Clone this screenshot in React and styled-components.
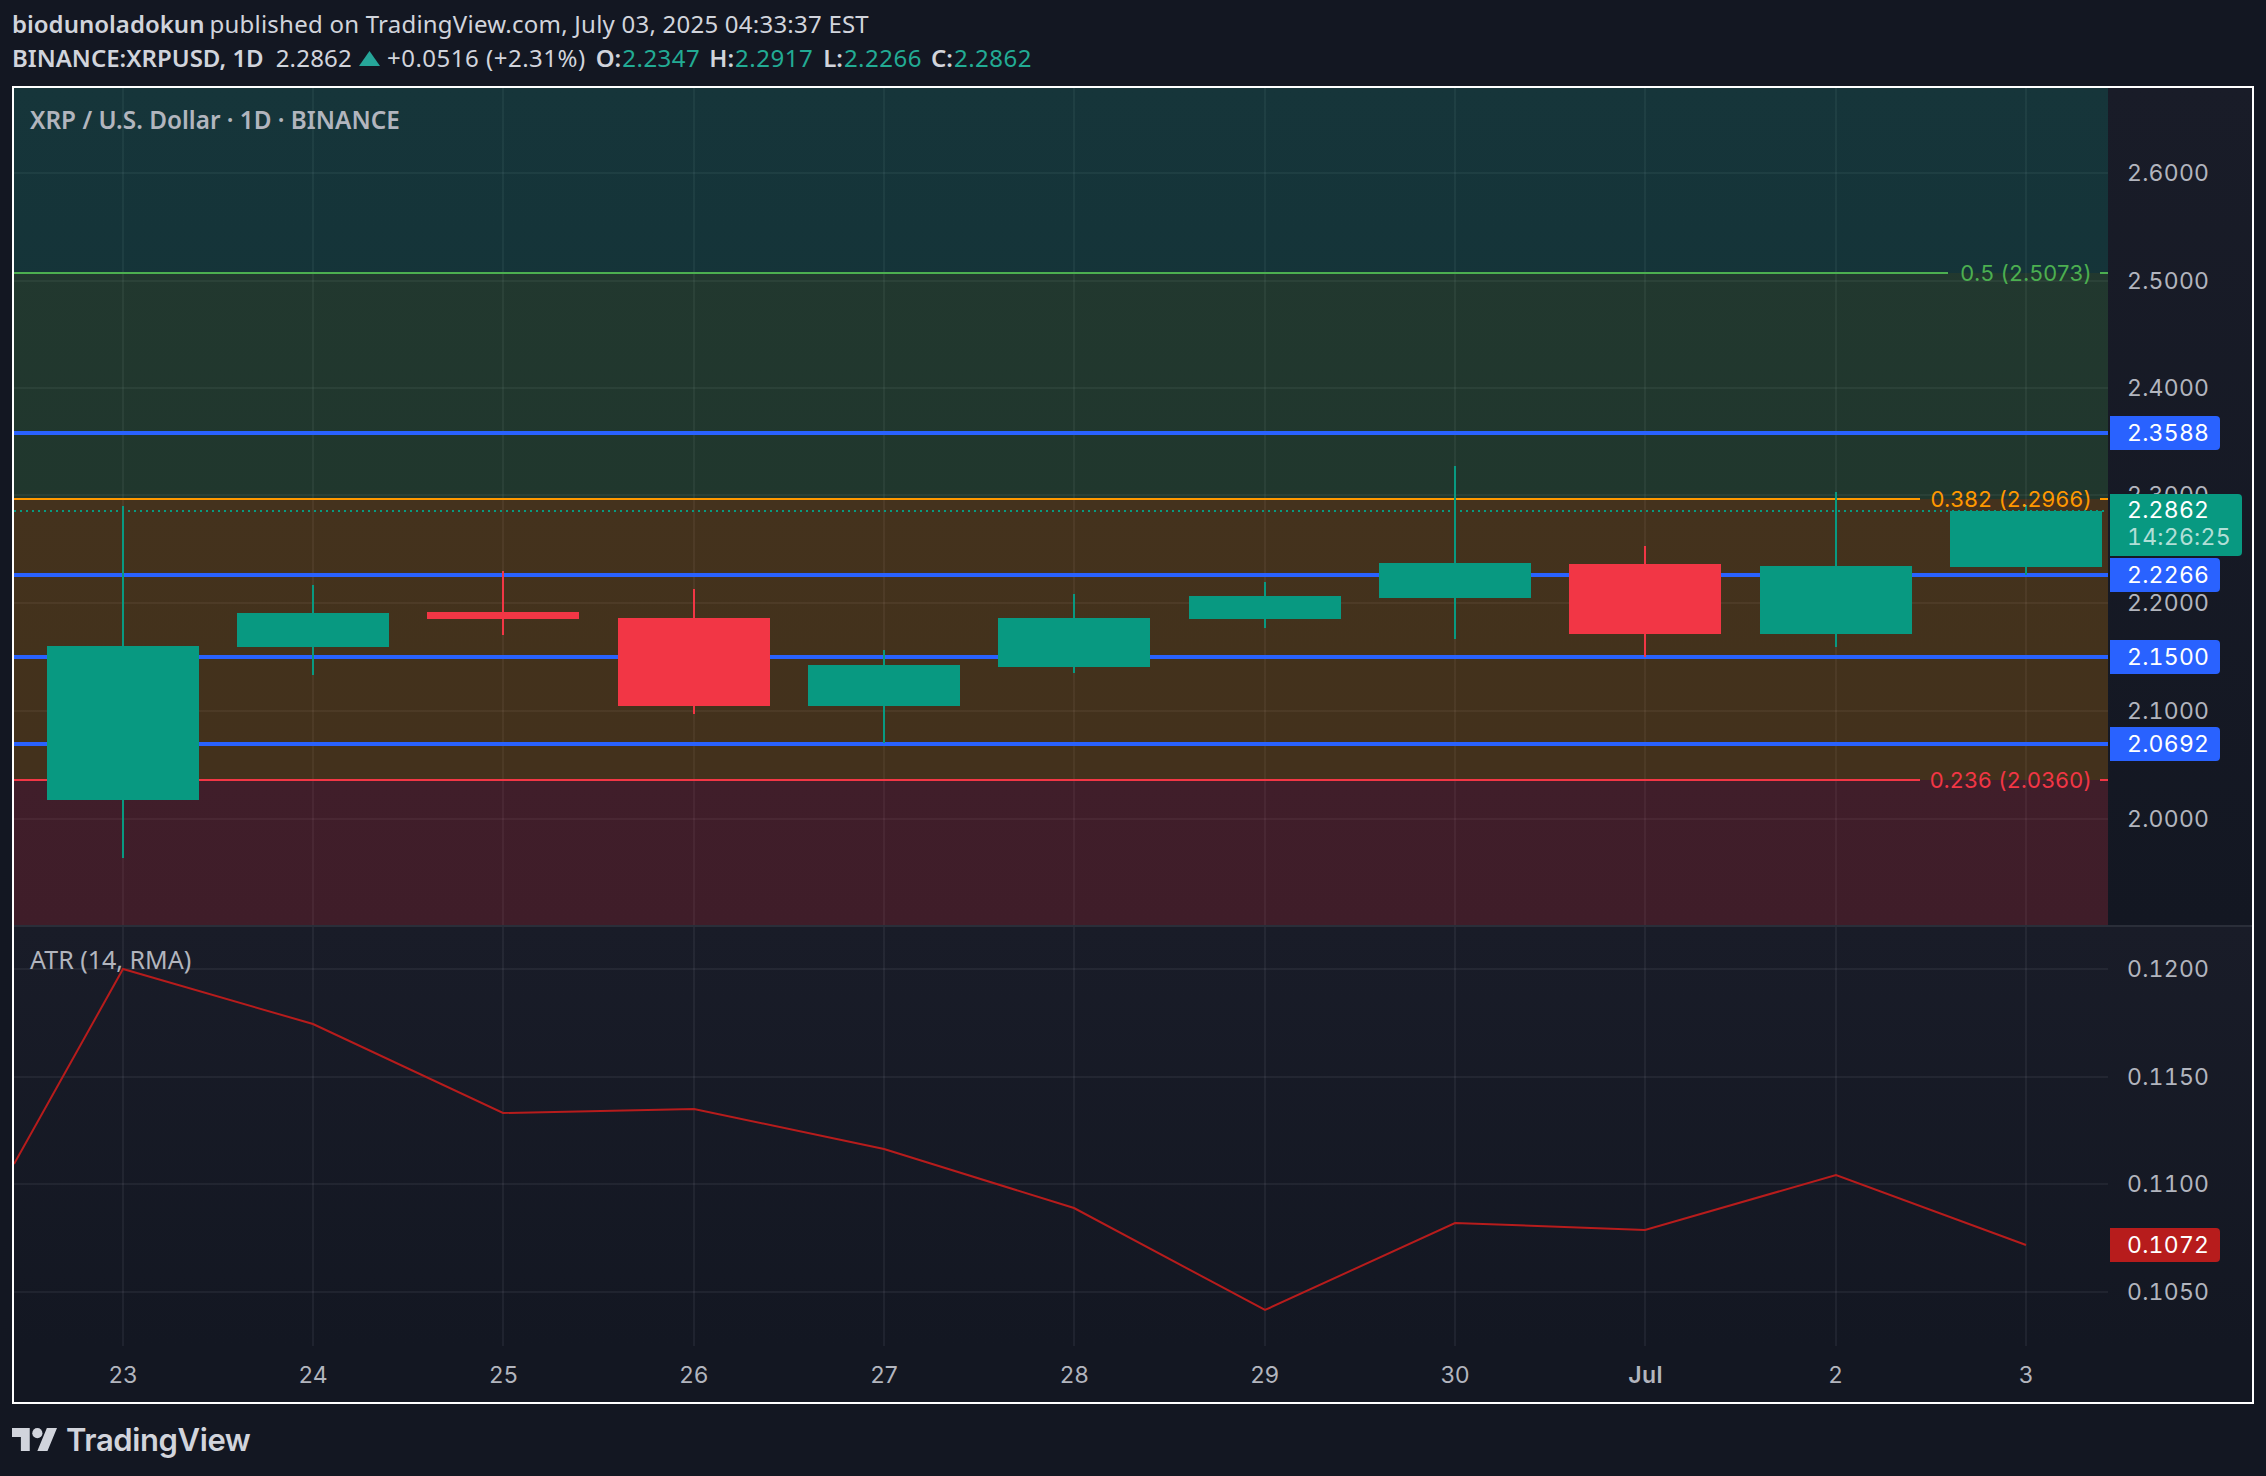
import React from 'react'
import styled, {createGlobalStyle} from 'styled-components'

const GlobalStyle = createGlobalStyle`
  html, body {
    margin: 0;
    padding: 0;
    background: #131722;
  }
  body {
    font-family: "Noto Sans", "Open Sans", sans-serif;
  }
`

// all numbers below are in page pixels, the panes subtract their own origin
const PLOT_LEFT = 14
const TOP_PANE_Y = 88
const ATR_PANE_Y = 927

const candles = [
  {x: 123, open: 800, close: 646, high: 506, low: 858, up: true},
  {x: 313, open: 647, close: 613, high: 585, low: 675, up: true},
  {x: 503, open: 612, close: 619, high: 571, low: 635, up: false},
  {x: 694, open: 618, close: 706, high: 589, low: 714, up: false},
  {x: 884, open: 706, close: 665, high: 650, low: 743, up: true},
  {x: 1074, open: 667, close: 618, high: 594, low: 673, up: true},
  {x: 1265, open: 619, close: 596, high: 582, low: 628, up: true},
  {x: 1455, open: 598, close: 563, high: 466, low: 639, up: true},
  {x: 1645, open: 564, close: 634, high: 546, low: 657, up: false},
  {x: 1836, open: 634, close: 566, high: 492, low: 647, up: true},
  {x: 2026, open: 567, close: 511, high: 505, low: 575, up: true},
]

const zones = [
  {from: 88, to: 273, fill: 'rgba(8, 153, 129, 0.2)'},
  {from: 273, to: 499, fill: 'rgba(76, 175, 80, 0.2)'},
  {from: 499, to: 780, fill: 'rgba(255, 152, 0, 0.2)'},
  {from: 780, to: 925, fill: 'rgba(242, 54, 69, 0.2)'},
]

const fibs = [
  {y: 273, color: '#4caf50', stop: 1948, label: '0.5 (2.5073)'},
  {y: 499, color: '#ff9800', stop: 1920, label: '0.382 (2.2966)'},
  {y: 780, color: '#f23645', stop: 1920, label: '0.236 (2.0360)'},
]

const priceTicks = [
  {y: 173, label: '2.6000'},
  {y: 281, label: '2.5000'},
  {y: 388, label: '2.4000'},
  {y: 495, label: '2.3000'},
  {y: 603, label: '2.2000'},
  {y: 711, label: '2.1000'},
  {y: 819, label: '2.0000'},
]
const levels = [
  {y: 433, label: '2.3588'},
  {y: 575, label: '2.2266'},
  {y: 657, label: '2.1500'},
  {y: 744, label: '2.0692'},
]
const atrTicks = [
  {y: 969, label: '0.1200'},
  {y: 1077, label: '0.1150'},
  {y: 1184, label: '0.1100'},
  {y: 1292, label: '0.1050'},
]
const atrLine = [
  [14, 1164], [123, 969], [313, 1024], [503, 1113], [694, 1109], [884, 1149],
  [1074, 1208], [1265, 1310], [1455, 1223], [1645, 1230], [1836, 1175], [2026, 1245],
]
const days = ['23', '24', '25', '26', '27', '28', '29', '30', 'Jul', '2', '3']

const Page = styled.div`
  width: 2266px;
  height: 1476px;
  padding: 0 12px;
  box-sizing: border-box;
  overflow: hidden;
  background: #131722;
`

const Header = styled.header`
  padding-top: 7px;
  margin-bottom: 11px;
  color: #d1d4dc;
  font-size: 24px;
  line-height: 34px;
  white-space: nowrap;
`

const Row = styled.div`
  display: flex;
  align-items: center;
  height: 34px;
`

const Strong = styled.b`
  font-weight: 600;
  margin-left: ${p => p.$gap || 0}px;
`

const Plain = styled.span`
  margin-left: ${p => p.$gap || 0}px;
  letter-spacing: ${p => p.$track || 0.23}px;
`

const Value = styled.span`
  color: #22ab94;
  margin-left: 1px;
  letter-spacing: 0.5px;
`

const UpArrow = styled.svg`
  width: 21px;
  height: 15px;
  margin-left: 7px;
  fill: #26a69a;
`

const Frame = styled.main`
  box-sizing: border-box;
  width: 2242px;
  height: 1318px;
  border: 2px solid #fff;
  display: grid;
  grid-template-columns: 2094px 144px;
  grid-template-rows: 837px 2px 419px 56px;
`

const paneGradient = 'linear-gradient(180deg, #191c28 0%, #131722 100%)'

const Plot = styled.section`
  position: relative;
  background: ${paneGradient};
  overflow: hidden;
`

const Axis = styled.aside`
  position: relative;
  background: ${paneGradient};
  font-family: Inter, "Liberation Sans", sans-serif;
  font-size: 23px;
  letter-spacing: 0.25px;
  font-variant-numeric: tabular-nums;
  overflow: hidden;
`

const Drawing = styled.svg`
  display: block;
  width: 100%;
  height: 100%;
`

const PaneTitle = styled.div`
  position: absolute;
  left: 16px;
  top: 15px;
  color: #b2b5be;
  font-size: ${p => p.$size}px;
  line-height: 34px;
  font-weight: ${p => p.$weight || 400};
  white-space: nowrap;
`

const FibLabel = styled.div.attrs(p => ({style: {top: p.$y}}))`
  position: absolute;
  right: 16px;
  transform: translateY(-50%);
  color: ${p => p.$color};
  font-family: Inter, "Liberation Sans", sans-serif;
  font-size: 22px;
  letter-spacing: 0.4px;
  line-height: 30px;
  white-space: nowrap;
`

const Tick = styled.div.attrs(p => ({style: {top: p.$y}}))`
  position: absolute;
  left: 19px;
  transform: translateY(-50%);
  color: #b2b5be;
  line-height: 30px;
`

const Tag = styled.div.attrs(p => ({style: {top: p.$y}}))`
  position: absolute;
  left: 2px;
  width: 110px;
  height: 34px;
  box-sizing: border-box;
  padding-left: 17px;
  transform: translateY(-50%);
  background: ${p => p.$color};
  border-radius: 0 4px 4px 0;
  color: #fff;
  line-height: 34px;
`

const PriceTag = styled.div`
  position: absolute;
  left: 2px;
  top: 406px;
  width: 132px;
  height: 62px;
  box-sizing: border-box;
  padding: 3px 0 0 17px;
  background: #089981;
  border-radius: 0 4px 4px 0;
  color: #fff;
  line-height: 27px;
`

const Countdown = styled.div`
  color: rgba(255, 255, 255, 0.7);
`

const Divider = styled.div`
  grid-column: 1 / -1;
  background: #2a2e39;
`

const TimeAxis = styled.div`
  display: grid;
  grid-template-columns: repeat(11, 190.3px);
  padding: 2px 0 0 14px;
  align-items: center;
  background: #131722;
  color: #b2b5be;
  font-family: Inter, "Liberation Sans", sans-serif;
  font-size: 23px;
  letter-spacing: 0.4px;
`

const Day = styled.div`
  text-align: center;
  font-weight: ${p => (p.$month ? 600 : 400)};
`

const AxisCorner = styled.div`
  background: #131722;
`

const Footer = styled.footer`
  display: flex;
  align-items: center;
  gap: 9px;
  height: 70px;
  color: #d1d4dc;
`

const LogoMark = styled.svg`
  width: 45px;
  height: 23px;
  fill: currentColor;
`

const LogoText = styled.span`
  font-family: Inter, "Liberation Sans", sans-serif;
  font-size: 31px;
  font-weight: 600;
  letter-spacing: -0.4px;
`

function GridLines({height, rows, originY}) {
  return (
    <g fill="rgba(240, 243, 250, 0.06)">
      {candles.map(c => (
        <rect key={c.x} x={c.x - PLOT_LEFT - 1} y={0} width={2} height={height} />
      ))}
      {rows.map(r => (
        <rect key={r.y} x={0} y={r.y - originY - 1} width={2094} height={2} />
      ))}
    </g>
  )
}

function Candle({x, open, close, high, low, up}) {
  const color = up ? '#089981' : '#f23645'
  const cx = x - PLOT_LEFT
  return (
    <g fill={color}>
      <rect x={cx - 1} y={high - TOP_PANE_Y} width={2} height={low - high} />
      <rect
        x={cx - 76}
        y={Math.min(open, close) - TOP_PANE_Y}
        width={152}
        height={Math.abs(open - close)}
      />
    </g>
  )
}

function PricePane() {
  return (
    <Plot>
      <Drawing viewBox="0 0 2094 837">
        <GridLines height={837} rows={priceTicks} originY={TOP_PANE_Y} />
        {zones.map(z => (
          <rect key={z.from} x={0} y={z.from - TOP_PANE_Y} width={2094} height={z.to - z.from} fill={z.fill} />
        ))}
        {fibs.map(f => (
          <g key={f.y} fill={f.color}>
            <rect x={0} y={f.y - TOP_PANE_Y - 1} width={f.stop - PLOT_LEFT} height={2} />
            <rect x={2086} y={f.y - TOP_PANE_Y - 1} width={8} height={2} />
          </g>
        ))}
        {levels.map(l => (
          <rect key={l.y} x={0} y={l.y - TOP_PANE_Y - 2} width={2094} height={4} fill="#2962ff" />
        ))}
        <line
          x1={0} x2={2090} y1={423} y2={423}
          stroke="#089981" strokeWidth={2} strokeDasharray="2 4"
        />
        {candles.map(c => <Candle key={c.x} {...c} />)}
      </Drawing>
      <PaneTitle $size={24.3} $weight={600}>XRP / U.S. Dollar · 1D · BINANCE</PaneTitle>
      {fibs.map(f => (
        <FibLabel key={f.y} $y={f.y - TOP_PANE_Y} $color={f.color}>{f.label}</FibLabel>
      ))}
    </Plot>
  )
}

function AtrPane() {
  const points = atrLine.map(([x, y]) => `${x - PLOT_LEFT},${y - ATR_PANE_Y}`).join(' ')
  return (
    <Plot>
      <Drawing viewBox="0 0 2094 419">
        <GridLines height={419} rows={atrTicks} originY={ATR_PANE_Y} />
        <polyline points={points} fill="none" stroke="#b71c1c" strokeWidth={2} />
      </Drawing>
      <PaneTitle $size={25}>ATR (14, RMA)</PaneTitle>
    </Plot>
  )
}

export default function App() {
  return (
    <Page>
      <GlobalStyle />
      <Header>
        <Row>
          <Strong>biodunoladokun</Strong>
          <Plain $gap={5}>published on TradingView.com, July 03, 2025 04:33:37 EST</Plain>
        </Row>
        <Row>
          <Strong>BINANCE:XRPUSD, 1D</Strong>
          <Plain $gap={12} $track={0.2}>2.2862</Plain>
          <UpArrow viewBox="0 0 21 15"><path d="M10.5 0L21 15H0z" /></UpArrow>
          <Plain $gap={7} $track={0.5}>+0.0516 (+2.31%)</Plain>
          <Strong $gap={10}>O:</Strong>
          <Value>2.2347</Value>
          <Strong $gap={9}>H:</Strong>
          <Value>2.2917</Value>
          <Strong $gap={10}>L:</Strong>
          <Value>2.2266</Value>
          <Strong $gap={9}>C:</Strong>
          <Value>2.2862</Value>
        </Row>
      </Header>
      <Frame>
        <PricePane />
        <Axis>
          {priceTicks.map(t => <Tick key={t.y} $y={t.y - TOP_PANE_Y}>{t.label}</Tick>)}
          {levels.map(l => (
            <Tag key={l.y} $y={l.y - TOP_PANE_Y} $color="#2962ff">{l.label}</Tag>
          ))}
          <PriceTag>
            <div>2.2862</div>
            <Countdown>14:26:25</Countdown>
          </PriceTag>
        </Axis>
        <Divider />
        <AtrPane />
        <Axis>
          {atrTicks.map(t => <Tick key={t.y} $y={t.y - ATR_PANE_Y}>{t.label}</Tick>)}
          <Tag $y={1245 - ATR_PANE_Y} $color="#b71c1c">0.1072</Tag>
        </Axis>
        <TimeAxis>
          {days.map(d => <Day key={d} $month={d === 'Jul'}>{d}</Day>)}
        </TimeAxis>
        <AxisCorner />
      </Frame>
      <Footer>
        <LogoMark viewBox="0 4 35.5 18">
          <path d="M14 22H7V11H0V4h14v18zM28 22h-8l7.5-18h8L28 22z" />
          <circle cx="20" cy="8" r="4" />
        </LogoMark>
        <LogoText>TradingView</LogoText>
      </Footer>
    </Page>
  )
}
